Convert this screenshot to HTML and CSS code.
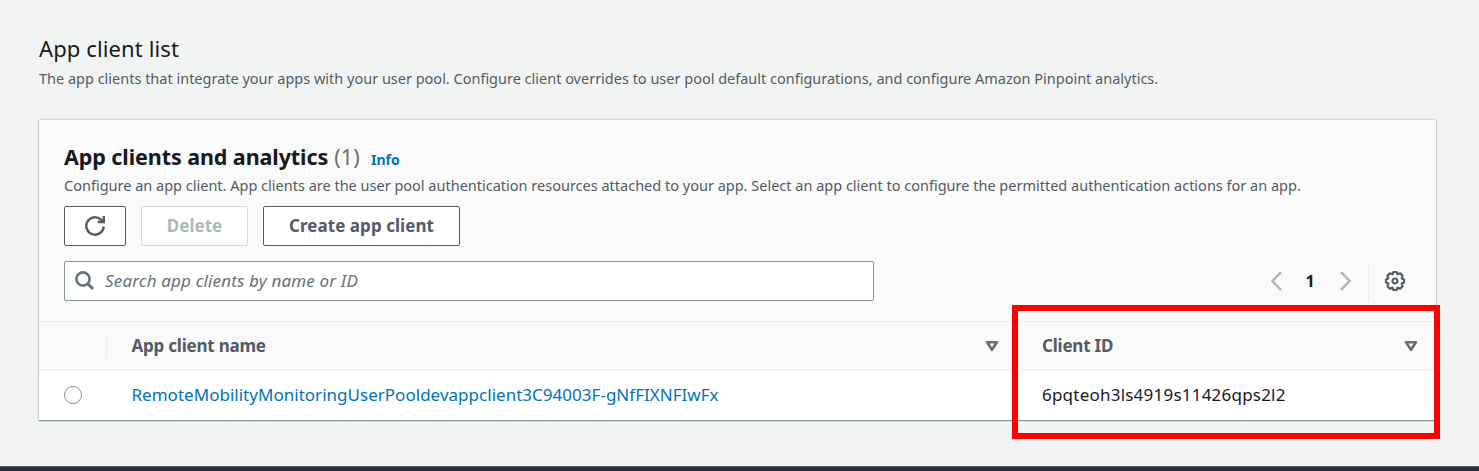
FILE: index.html
```html
<!DOCTYPE html>
<html lang="en">
<head>
<meta charset="utf-8">
<title>App client list</title>
<link rel="stylesheet" href="styles.css">
</head>
<body>
<main class="page">
  <header class="page-header">
    <h1 class="page-title">App client list</h1>
    <p class="page-description">The app clients that integrate your apps with your user pool. Configure client overrides to user pool default configurations, and configure Amazon Pinpoint analytics.</p>
  </header>
  <section class="card">
    <div class="card-header">
      <div class="heading">
        <h2 class="card-title">App clients and analytics</h2>
        <span class="counter">(1)</span>
        <a class="info">Info</a>
      </div>
      <p class="card-description">Configure an app client. App clients are the user pool authentication resources attached to your app. Select an app client to configure the permitted authentication actions for an app.</p>
      <div class="actions">
        <button class="button refresh" aria-label="Refresh">
          <svg width="20" height="20" viewBox="0 0 20 20"><path d="M18.7 10.5A8.7 8.7 0 1 1 15.8 3.5L18 5.6" fill="none" stroke="currentColor" stroke-width="2.4"/><path d="M18.8 0V6H12.7" fill="none" stroke="currentColor" stroke-width="2.4"/></svg>
        </button>
        <button class="button delete" disabled>Delete</button>
        <button class="button create">Create app client</button>
      </div>
      <div class="tools">
        <div class="search">
          <svg width="20" height="20" viewBox="0 0 20 20"><circle cx="8" cy="8" r="6.6" fill="none" stroke="currentColor" stroke-width="2.6"/><path d="M12.6 12.6L18 18" stroke="currentColor" stroke-width="3"/></svg>
          <span class="placeholder">Search app clients by name or ID</span>
        </div>
        <div class="pagination">
          <svg class="arrow" width="12" height="20" viewBox="0 0 12 20"><path d="M11 1.2L2.4 10L11 18.8" fill="none" stroke="currentColor" stroke-width="2.4"/></svg>
          <span class="page-number">1</span>
          <svg class="arrow" width="12" height="20" viewBox="0 0 12 20"><path d="M1 1.2L9.6 10L1 18.8" fill="none" stroke="currentColor" stroke-width="2.4"/></svg>
          <span class="separator"></span>
          <svg class="gear" width="22" height="22" viewBox="-11 -11 22 22"><g fill="none" stroke="currentColor" stroke-width="2.2" stroke-linejoin="round"><path d="M-1.6-9H1.6L2.5-6.7L5.2-7.6L7.6-5.2L6.7-2.5L9-1.6V1.6L6.7 2.5L7.6 5.2L5.2 7.6L2.5 6.7L1.6 9H-1.6L-2.5 6.7L-5.2 7.6L-7.6 5.2L-6.7 2.5L-9 1.6V-1.6L-6.7-2.5L-7.6-5.2L-5.2-7.6L-2.5-6.7Z"/><circle r="2.5"/></g></svg>
        </div>
      </div>
    </div>
    <div class="row columns">
      <div class="cell select"></div>
      <div class="cell name"><span>App client name</span><svg class="sort" width="14" height="12" viewBox="0 0 14 12"><path d="M2.1 2.2H11.9L7 9.8Z" fill="none" stroke="currentColor" stroke-width="2.6" stroke-linejoin="round"/></svg></div>
      <div class="cell client"><span>Client ID</span><svg class="sort" width="14" height="12" viewBox="0 0 14 12"><path d="M2.1 2.2H11.9L7 9.8Z" fill="none" stroke="currentColor" stroke-width="2.6" stroke-linejoin="round"/></svg></div>
    </div>
    <div class="row data">
      <div class="cell select"><span class="radio"></span></div>
      <div class="cell name"><a class="client-link">RemoteMobilityMonitoringUserPooldevappclient3C94003F-gNfFIXNFIwFx</a></div>
      <div class="cell client"><span class="client-id">6pqteoh3ls4919s11426qps2l2</span></div>
    </div>
    <div class="highlight"></div>
  </section>
</main>
<footer class="footer"></footer>
</body>
</html>
```
FILE: styles.css
```css
* { box-sizing: border-box; }
body {
  margin: 0;
  height: 471px;
  display: flex;
  flex-direction: column;
  overflow: hidden;
  background: #f2f4f4;
  color: #16191f;
  font-family: "Noto Sans", "Open Sans", sans-serif;
  font-size: 17px;
}
h1, h2, p { margin: 0; white-space: nowrap; }
.page { flex: 1; padding: 33px 43px 0 39px; }
.page-header { height: 87px; }
.page-title { font-size: 22px; font-weight: 400; line-height: 30px; letter-spacing: 0.12px; }
.page-description { font-size: 14.5px; line-height: 20px; margin-top: 5px; color: #545b64; letter-spacing: -0.006px; }
.card {
  position: relative;
  width: 1397px;
  height: 300px;
  background: #fff;
  box-shadow: 0 1px 1px #879596, 0 0 2px #95a3a4;
}
.card-header { height: 202px; padding: 22px 25px 0; background: #fafafa; border-bottom: 1px solid #eaeded; }
.heading { display: flex; align-items: baseline; height: 33px; line-height: 30px; }
.card-title { font-size: 21.5px; font-weight: 700; line-height: 30px; letter-spacing: -0.08px; }
.counter { margin-left: 6px; font-size: 21.5px; color: #687078; letter-spacing: 0.2px; }
.info { margin-left: 11px; font-size: 14px; font-weight: 700; color: #0073bb; }
.card-description { font-size: 14.5px; line-height: 20px; color: #545b64; }
.actions { display: flex; gap: 15px; margin-top: 11px; }
.button {
  display: flex; align-items: center; justify-content: center;
  height: 40px; padding: 0 0 1px;
  border: 1px solid #545b64; border-radius: 2px;
  background: #fff; color: #545b64;
  font: 700 17px "Noto Sans", sans-serif;
  white-space: nowrap;
}
.refresh { width: 62px; padding-bottom: 0; }
.delete { width: 107px; border-color: #d5dbdb; color: #aab7b8; }
.create { width: 197px; letter-spacing: 0.05px; }
.tools { display: flex; justify-content: space-between; margin-top: 15px; }
.search {
  display: flex; align-items: center; gap: 10px;
  width: 810px; height: 40px; padding-left: 10px;
  border: 1px solid #879596; border-radius: 2px;
  background: #fff; color: #687078;
}
.placeholder { padding-bottom: 2px; font-style: italic; letter-spacing: 0.16px; white-space: nowrap; }
.pagination { display: flex; align-items: center; padding-right: 5px; color: #545b64; }
.arrow { color: #aab7b8; }
.page-number { width: 58px; padding-right: 2px; text-align: center; font-size: 16px; font-weight: 700; color: #16191f; }
.separator { width: 1px; height: 39px; margin: 0 15px 0 16px; background: #eaeded; }
.row { display: flex; }
.columns { height: 48px; background: #fafafa; border-bottom: 1px solid #eaeded; color: #545b64; font-weight: 700; letter-spacing: -0.22px; }
.data { height: 50px; }
.cell { display: flex; align-items: center; justify-content: space-between; white-space: nowrap; }
.select { width: 68px; padding-left: 25px; }
.columns .select { height: 24px; margin-top: 12px; border-right: 1px solid #eaeded; }
.name { width: 910px; padding: 0 18px 0 24.5px; }
.client { width: 419px; padding: 0 18px 0 25px; }
.sort { color: #687078; }
.radio { width: 18px; height: 18px; border: 1.25px solid #879596; border-radius: 50%; }
.client-link { padding-bottom: 2px; color: #0073bb; letter-spacing: 0.02px; }
.client-id { padding-bottom: 2px; letter-spacing: 0.22px; }
.highlight { position: absolute; left: 973px; top: 185px; width: 428px; height: 134px; border: 6px solid #f00; }
.footer { height: 5px; background: #232f3e; border-top: 1px solid #545b64; }
```
